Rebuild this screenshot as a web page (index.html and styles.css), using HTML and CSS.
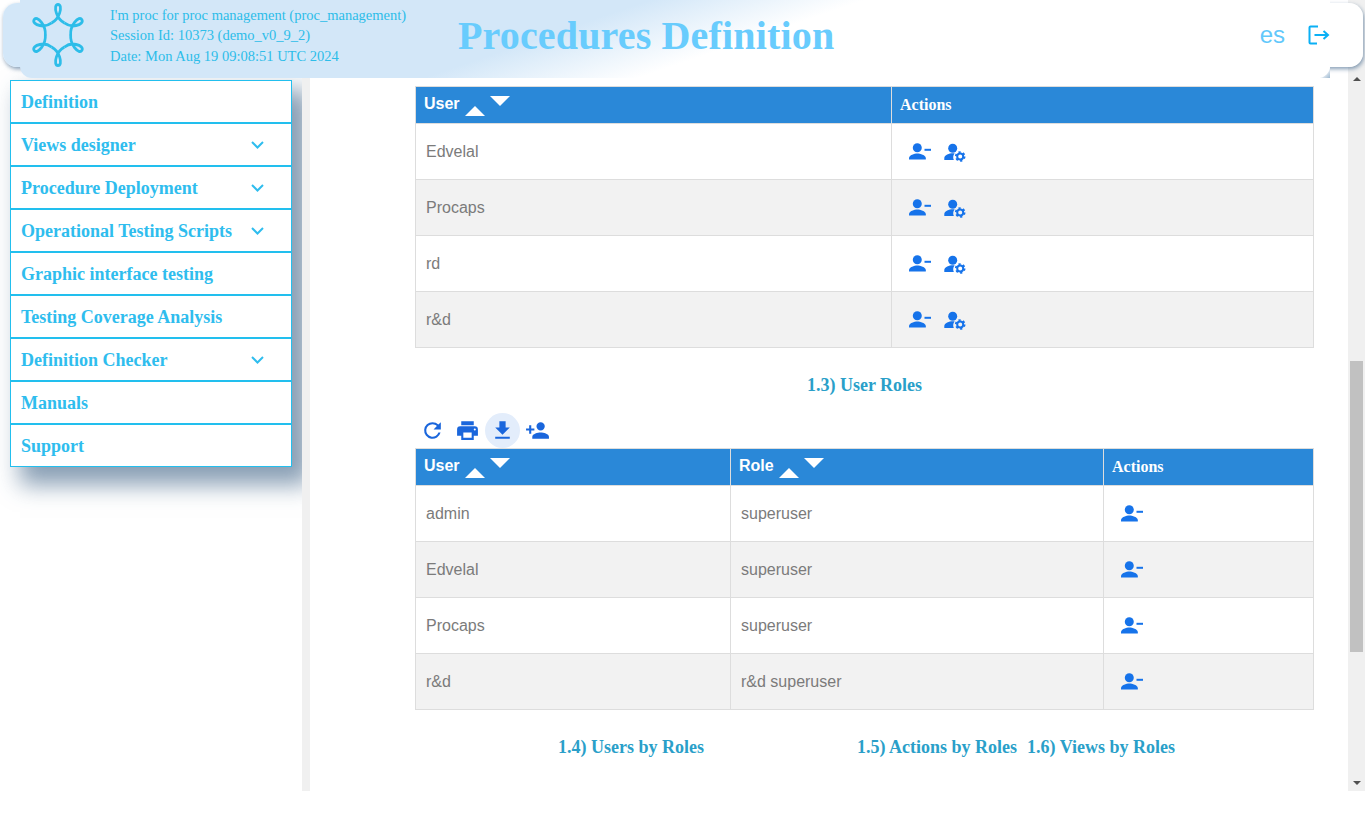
FILE: index.html
```html
<!DOCTYPE html>
<html lang="en">
<head>
<meta charset="utf-8">
<title>Procedures Definition</title>
<link rel="stylesheet" href="styles.css">
</head>
<body>
<div class="page">
  <div class="workspace">
    <aside class="sidebar">
      <nav class="menu">
        <a class="menu-item">Definition</a>
        <a class="menu-item">Views designer<svg class="chev" viewBox="0 0 13 8"><path d="M1 1l5.500 5.500L12 1"/></svg></a>
        <a class="menu-item">Procedure Deployment<svg class="chev" viewBox="0 0 13 8"><path d="M1 1l5.500 5.500L12 1"/></svg></a>
        <a class="menu-item">Operational Testing Scripts<svg class="chev" viewBox="0 0 13 8"><path d="M1 1l5.500 5.500L12 1"/></svg></a>
        <a class="menu-item">Graphic interface testing</a>
        <a class="menu-item">Testing Coverage Analysis</a>
        <a class="menu-item">Definition Checker<svg class="chev" viewBox="0 0 13 8"><path d="M1 1l5.500 5.500L12 1"/></svg></a>
        <a class="menu-item">Manuals</a>
        <a class="menu-item">Support</a>
      </nav>
    </aside>
    <div class="divider"></div>
    <main class="content">
      <table class="grid grid-top">
        <colgroup><col class="c-user"><col></colgroup>
        <thead><tr>
          <th class="sort"><span class="th-in">User<i class="up"></i><i class="down"></i></span></th>
          <th class="act">Actions</th>
        </tr></thead>
        <tbody>
          <tr><td>Edvelal</td><td class="icons"><svg class="ic" viewBox="0 0 24 24"><use href="#rm"/></svg><svg class="ic" viewBox="0 0 24 24"><use href="#gear"/></svg></td></tr>
          <tr><td>Procaps</td><td class="icons"><svg class="ic" viewBox="0 0 24 24"><use href="#rm"/></svg><svg class="ic" viewBox="0 0 24 24"><use href="#gear"/></svg></td></tr>
          <tr><td>rd</td><td class="icons"><svg class="ic" viewBox="0 0 24 24"><use href="#rm"/></svg><svg class="ic" viewBox="0 0 24 24"><use href="#gear"/></svg></td></tr>
          <tr><td>r&amp;d</td><td class="icons"><svg class="ic" viewBox="0 0 24 24"><use href="#rm"/></svg><svg class="ic" viewBox="0 0 24 24"><use href="#gear"/></svg></td></tr>
        </tbody>
      </table>
      <h3 class="section section-a">1.3) User Roles</h3>
      <div class="toolbar">
        <button class="tool"><svg viewBox="0 0 24 24"><path d="M17.65 6.35A7.96 7.96 0 0 0 12 4a8 8 0 1 0 7.730 10h-2.080A6 6 0 1 1 12 6c1.660 0 3.140.69 4.220 1.780L13 11h7V4z"/></svg></button>
        <button class="tool"><svg viewBox="0 0 24 24"><path d="M19 8H5a3 3 0 0 0-3 3v6h4v4h12v-4h4v-6a3 3 0 0 0-3-3zm-3 11H8v-5h8zm3-7a1 1 0 1 1 0-2 1 1 0 0 1 0 2zM18 3H6v4h12z"/></svg></button>
        <button class="tool active"><svg viewBox="0 0 24 24"><path d="M19 9h-4V3H9v6H5l7 7zM5 18v2h14v-2z"/></svg></button>
        <button class="tool"><svg viewBox="0 0 24 24"><path d="M15 12a4 4 0 1 0 0-8 4 4 0 0 0 0 8zm-9-2V7H4v3H1v2h3v3h2v-3h3v-2zm9 4c-2.670 0-8 1.340-8 4v2h16v-2c0-2.660-5.330-4-8-4z"/></svg></button>
      </div>
      <table class="grid">
        <colgroup><col class="c-u2"><col class="c-r2"><col></colgroup>
        <thead><tr>
          <th class="sort"><span class="th-in">User<i class="up"></i><i class="down"></i></span></th>
          <th class="sort"><span class="th-in">Role<i class="up"></i><i class="down"></i></span></th>
          <th class="act">Actions</th>
        </tr></thead>
        <tbody>
          <tr><td>admin</td><td>superuser</td><td class="icons"><svg class="ic" viewBox="0 0 24 24"><use href="#rm"/></svg></td></tr>
          <tr><td>Edvelal</td><td>superuser</td><td class="icons"><svg class="ic" viewBox="0 0 24 24"><use href="#rm"/></svg></td></tr>
          <tr><td>Procaps</td><td>superuser</td><td class="icons"><svg class="ic" viewBox="0 0 24 24"><use href="#rm"/></svg></td></tr>
          <tr><td>r&amp;d</td><td>r&amp;d superuser</td><td class="icons"><svg class="ic" viewBox="0 0 24 24"><use href="#rm"/></svg></td></tr>
        </tbody>
      </table>
      <div class="tabs">
        <h3 class="section tab-a">1.4) Users by Roles</h3>
        <h3 class="section tab-b">1.5) Actions by Roles</h3>
        <h3 class="section tab-c">1.6) Views by Roles</h3>
      </div>
    </main>
    <div class="scrollbar">
      <span class="arrow arrow-up"></span>
      <div class="track"><div class="thumb"></div></div>
      <span class="arrow arrow-down"></span>
    </div>
  </div>

  <header class="topbar">
    <div class="topbar-inner">
      <svg class="logo" viewBox="-32 -32 64 64" preserveAspectRatio="none">
        <use href="#petal"/>
        <use href="#petal" transform="rotate(60)"/>
        <use href="#petal" transform="rotate(120)"/>
        <use href="#petal" transform="rotate(180)"/>
        <use href="#petal" transform="rotate(240)"/>
        <use href="#petal" transform="rotate(300)"/>
      </svg>
      <div class="session">
        <div>I'm proc for proc management (proc_management)</div>
        <div>Session Id: 10373 (demo_v0_9_2)</div>
        <div>Date: Mon Aug 19 09:08:51 UTC 2024</div>
      </div>
      <h1 class="title">Procedures Definition</h1>
      <div class="top-actions">
        <span class="lang">es</span>
        <svg class="logout" viewBox="0 0 24 24"><path d="M11 3.500H3.500a1 1 0 0 0-1 1v15a1 1 0 0 0 1 1H10M7.500 12h13.500M16.500 8l4.500 4-4.500 4"/></svg>
      </div>
    </div>
  </header>
</div>

<svg class="defs" width="0" height="0">
  <defs>
    <path id="petal" d="M-7-12.100C-3-14 0-17 1.800-22 3.600-27 2.800-30.500 0-30.500-2.800-30.500-3.600-27-1.800-22 0-17 3-14 7-12.100"/>
    <g id="rm"><circle cx="9.300" cy="7.800" r="4.500"/><path d="M1 19.500v-1.300c0-3.100 5.400-4.700 8.300-4.700s8.500 1.600 8.500 4.700v1.300z"/><rect x="16.500" y="8.800" width="6.500" height="2"/></g>
    <g id="gear">
      <circle cx="9.700" cy="8.200" r="4.500"/>
      <path d="M1.300 20v-2c0-3 5-4.700 8.400-4.700.7 0 1.400.1 2 .2-1 1-1.500 2.300-1.500 3.800 0 1 .2 1.900.7 2.700z"/>
      <circle cx="17.200" cy="16.500" r="3" fill="none" stroke="#1673ea" stroke-width="2"/>
      <circle cx="17.200" cy="16.500" r="4.400" fill="none" stroke="#1673ea" stroke-width="1.800" stroke-dasharray="2.200 2.410"/>
    </g>
  </defs>
</svg>
</body>
</html>
```

FILE: styles.css
```css
* { box-sizing: border-box; }
html, body { margin: 0; height: 821px; overflow: hidden; background: #fff; }
body { font-family: "Liberation Serif", serif; }
.page { position: relative; width: 1365px; height: 821px; }
.workspace { display: flex; height: 791px; }
.sidebar { width: 302px; padding: 80px 0 0 10px; flex: none; overflow: hidden; }
.menu { width: 282px; box-shadow: 14px 14px 22px 4px rgba(40, 80, 120, .55); background: #fff; }
.menu-item { display: flex; align-items: center; justify-content: space-between; height: 43px; padding: 1px 27px 0 10px; border: 1px solid #22bfee; font-size: 18px; font-weight: 700; color: #2fbdee; }
.chev { width: 13px; height: 8px; margin-top: -1px; fill: none; stroke: #2fbdee; stroke-width: 2; }
.divider { width: 8px; flex: none; background: #f0f0f0; }
.content { flex: 1; min-width: 0; padding: 86px 0 0 105px; }
.grid { width: 899px; border-collapse: collapse; table-layout: fixed; font-family: "Liberation Sans", sans-serif; font-size: 16px; color: #7b7b7b; }
.grid th { background: #2a88d8; color: #fff; height: 37px; border: 1px solid #ddd; text-align: left; padding: 2px 8px 0; font-size: 16px; vertical-align: top; }
.grid th.act { font-family: "Liberation Serif", serif; font-size: 16px; padding-top: 0; vertical-align: middle; }
.grid td { height: 56px; padding: 0 10px; border: 1px solid #ddd; }
.grid tbody tr:nth-child(even) td { background: #f2f2f2; }
.c-user { width: 476px; }
.c-u2 { width: 315px; }
.c-r2 { width: 373px; }
.th-in { display: flex; align-items: flex-start; height: 30px; line-height: 30px; }
.up { width: 0; height: 0; margin: 17px 0 0 5px; border-left: 10px solid transparent; border-right: 10px solid transparent; border-bottom: 10px solid #fff; }
.down { width: 0; height: 0; margin: 7px 0 0 5px; border-left: 10px solid transparent; border-right: 10px solid transparent; border-top: 10px solid #fff; }
.icons { padding-left: 16px !important; }
.icons .ic { width: 24px; height: 24px; fill: #1673ea; margin-right: 11px; vertical-align: middle; }
.section { margin: 0; font-size: 18px; font-weight: 700; color: #2a9fc9; text-align: center; }
.section-a { width: 899px; padding-top: 27px; height: 65px; }
.toolbar { display: flex; height: 35px; align-items: center; }
.tool { width: 35px; height: 35px; border: 0; border-radius: 50%; background: transparent; padding: 0; display: flex; align-items: center; justify-content: center; }
.tool svg { width: 25px; height: 25px; fill: #1a66dc; }
.tool.active { background: #e3edfb; }
.tabs { display: flex; padding-top: 27px; }
.tab-a { margin-left: 143px; }
.tab-b { margin-left: 153px; }
.tab-c { margin-left: 10px; }
.scrollbar { width: 17px; flex: none; background: #f0f0f0; margin-left: 38px; position: relative; }
.track { position: absolute; top: 17px; bottom: 17px; left: 2px; right: 0; }
.thumb { position: absolute; top: 344px; height: 291px; left: 0; right: 2px; background: #c1c1c1; }
.arrow { position: absolute; left: 5px; width: 0; height: 0; border-left: 4px solid transparent; border-right: 4px solid transparent; }
.arrow-up { top: 77px; border-bottom: 4px solid #505050; }
.arrow-down { bottom: 6px; border-top: 4px solid #505050; }
.topbar { position: absolute; left: 3px; top: 3px; width: 1360px; height: 64px; border-radius: 14px; background: linear-gradient(90deg, #d3e7f8 50%, #fff 50%); box-shadow: 1px 2px 4px rgba(50, 90, 130, .6); }
.topbar::after { content: ""; position: absolute; right: 33px; top: 64px; width: 10px; height: 11px; background: linear-gradient(135deg, #fff 40%, #9db8d0 100%); }
.topbar-inner { position: absolute; z-index: 1; left: 17px; top: -3px; width: 1310px; height: 78px; padding-left: 6px; border-radius: 0 0 12px 12px; display: flex; align-items: center; background: linear-gradient(161deg, #d3e7f8 41%, #fff 55%); }
.logo { width: 58px; height: 64px; flex: none; margin: -9px 23.5px 0 2.5px; fill: none; stroke: #2dbde9; stroke-width: 3; }
.session { font-size: 14.5px; line-height: 20.5px; color: #2dbde9; width: 348px; flex: none; margin-top: -7px; white-space: nowrap; }
.title { margin: -8px 0 0; font-size: 40px; letter-spacing: .16px; font-weight: 700; color: #68ccfd; white-space: nowrap; }
.top-actions { margin: -9px -1px 0 auto; display: flex; align-items: center; gap: 22px; }
.lang { font-family: "Liberation Sans", sans-serif; font-size: 24px; color: #62c8fb; }
.logout { width: 24px; height: 24px; fill: none; stroke: #0bb0f5; stroke-width: 2; }
.defs { position: absolute; }
```
